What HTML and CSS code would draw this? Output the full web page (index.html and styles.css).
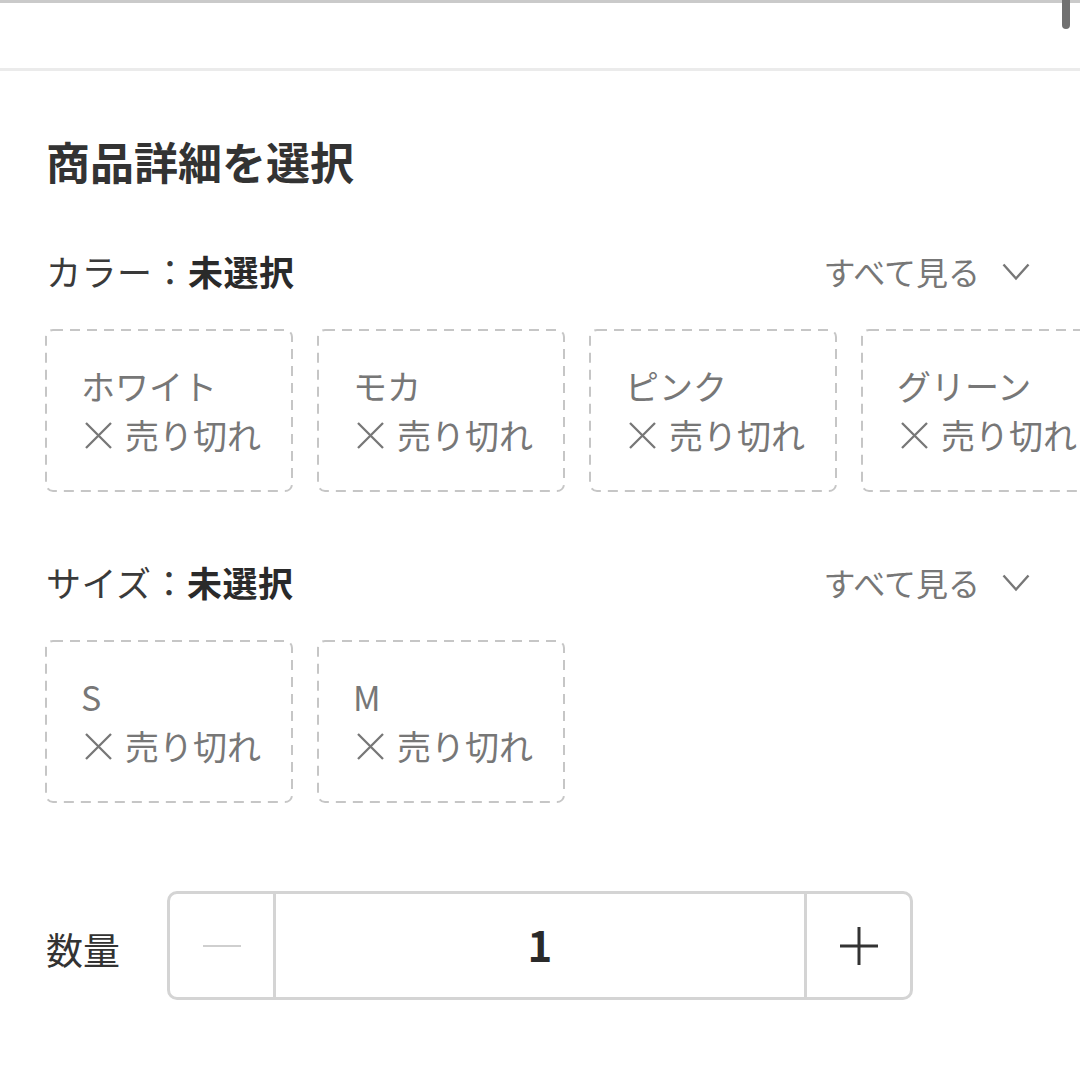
FILE: index.html
```html
<!DOCTYPE html>
<html lang="ja">
<head>
<meta charset="utf-8">
<link rel="stylesheet" href="styles.css">
</head>
<body>
<div class="page">
  <div class="topbar"><span class="scroll-thumb"></span></div>
  <main class="content">
    <h1 class="title">商品詳細を選択</h1>

    <section class="group">
      <div class="group-head">
        <div class="label">カラー：<b>未選択</b></div>
        <div class="see-all">すべて見る<svg class="chev" width="28" height="18" viewBox="0 0 28 18"><polyline points="1.5,1.5 14,15.5 26.5,1.5" fill="none" stroke="#777" stroke-width="2.4"/></svg></div>
      </div>
      <div class="options">
        <div class="opt"><div>ホワイト</div><div class="sold"><svg class="x" width="27" height="27" viewBox="0 0 27 27"><path d="M1 1L26 26M26 1L1 26" stroke="#777" stroke-width="2.3" fill="none"/></svg>売り切れ</div></div>
        <div class="opt"><div>モカ</div><div class="sold"><svg class="x" width="27" height="27" viewBox="0 0 27 27"><path d="M1 1L26 26M26 1L1 26" stroke="#777" stroke-width="2.3" fill="none"/></svg>売り切れ</div></div>
        <div class="opt"><div>ピンク</div><div class="sold"><svg class="x" width="27" height="27" viewBox="0 0 27 27"><path d="M1 1L26 26M26 1L1 26" stroke="#777" stroke-width="2.3" fill="none"/></svg>売り切れ</div></div>
        <div class="opt"><div>グリーン</div><div class="sold"><svg class="x" width="27" height="27" viewBox="0 0 27 27"><path d="M1 1L26 26M26 1L1 26" stroke="#777" stroke-width="2.3" fill="none"/></svg>売り切れ</div></div>
      </div>
    </section>

    <section class="group">
      <div class="group-head">
        <div class="label">サイズ：<b>未選択</b></div>
        <div class="see-all">すべて見る<svg class="chev" width="28" height="18" viewBox="0 0 28 18"><polyline points="1.5,1.5 14,15.5 26.5,1.5" fill="none" stroke="#777" stroke-width="2.4"/></svg></div>
      </div>
      <div class="options">
        <div class="opt"><div>S</div><div class="sold"><svg class="x" width="27" height="27" viewBox="0 0 27 27"><path d="M1 1L26 26M26 1L1 26" stroke="#777" stroke-width="2.3" fill="none"/></svg>売り切れ</div></div>
        <div class="opt"><div>M</div><div class="sold"><svg class="x" width="27" height="27" viewBox="0 0 27 27"><path d="M1 1L26 26M26 1L1 26" stroke="#777" stroke-width="2.3" fill="none"/></svg>売り切れ</div></div>
      </div>
    </section>

    <section class="qty">
      <div class="qty-label">数量</div>
      <div class="stepper">
        <div class="step minus"><svg width="38" height="4" viewBox="0 0 38 4"><line x1="0" y1="2" x2="38" y2="2" stroke="#cfcfcf" stroke-width="2"/></svg></div>
        <div class="value">1</div>
        <div class="step plus"><svg width="38" height="38" viewBox="0 0 38 38"><line x1="0" y1="19" x2="38" y2="19" stroke="#333" stroke-width="3"/><line x1="19" y1="0" x2="19" y2="38" stroke="#333" stroke-width="3"/></svg></div>
      </div>
    </section>
  </main>
</div>
</body>
</html>
```

FILE: styles.css
```css
* { box-sizing: border-box; }
html, body {
  margin: 0;
  padding: 0;
  background: #fff;
}
body {
  width: 1080px;
  height: 1080px;
  overflow: hidden;
  font-family: "Noto Sans CJK JP", "Noto Sans", sans-serif;
  color: #333;
}
.page {
  width: 1080px;
  overflow: hidden;
}
.topbar {
  position: relative;
  height: 71px;
  border-top: 3px solid #cacaca;
  border-bottom: 3px solid #ebebeb;
}
.scroll-thumb {
  position: absolute;
  right: 10px;
  top: -3px;
  width: 8px;
  height: 29px;
  background: #707070;
  border-radius: 0 0 4px 4px;
}
.content {
  padding: 0 0 0 45px;
}
.title {
  margin: 64px 0 0 1px;
  font-size: 44px;
  line-height: 53px;
  font-weight: 700;
  color: #333;
}
.group {
  margin-top: 59px;
}
.group + .group {
  margin-top: 66px;
}
.group-head {
  display: flex;
  align-items: center;
  justify-content: space-between;
  padding-right: 50px;
  padding-left: 1px;
  height: 48px;
}
.label {
  font-size: 35px;
  line-height: 48px;
  color: #3a3a3a;
  letter-spacing: 0.5px;
}
.label b {
  font-weight: 700;
  color: #2a2a2a;
}
.see-all {
  display: flex;
  align-items: center;
  font-size: 32px;
  line-height: 48px;
  color: #777;
}
.chev {
  margin-left: 22px;
  margin-top: 2px;
}
.options {
  display: flex;
  gap: 24px;
  margin-top: 34px;
  width: 1200px;
}
.opt {
  flex: 0 0 248px;
  height: 163px;
  background-image: url("data:image/svg+xml;utf8,<svg xmlns='http://www.w3.org/2000/svg' width='248' height='163'><rect x='1' y='1' width='246' height='161' rx='7' ry='7' fill='none' stroke='%23c6c6c6' stroke-width='2' stroke-dasharray='10 7'/></svg>");
  background-repeat: no-repeat;
  padding: 32px 0 30px 36px;
  font-size: 34px;
  line-height: 49px;
  color: #777;
  white-space: nowrap;
}
.sold {
  display: flex;
  align-items: center;
}
.x {
  flex: none;
  margin: 1px 13px 0 4px;
}
.qty {
  display: flex;
  align-items: center;
  margin-top: 88px;
}
.qty-label {
  width: 122px;
  font-size: 37px;
  line-height: 50px;
  color: #333;
  padding-top: 6px;
  padding-left: 1px;
}
.stepper {
  display: flex;
  width: 746px;
  height: 109px;
  border: 3px solid #d4d4d4;
  border-radius: 10px;
}
.step {
  flex: 0 0 106px;
  display: flex;
  align-items: center;
  justify-content: center;
}
.minus {
  border-right: 3px solid #d4d4d4;
}
.plus {
  border-left: 3px solid #d4d4d4;
}
.value {
  flex: 1;
  display: flex;
  align-items: center;
  justify-content: center;
  font-size: 42px;
  font-weight: 700;
  color: #2a2a2a;
  padding-bottom: 4px;
}
```
